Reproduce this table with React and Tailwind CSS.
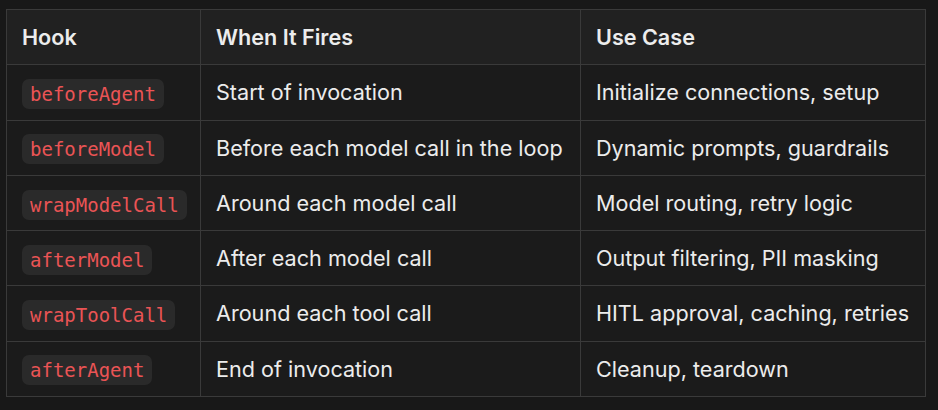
import React from "react";

const rows = [
  ["beforeAgent", "Start of invocation", "Initialize connections, setup"],
  ["beforeModel", "Before each model call in the loop", "Dynamic prompts, guardrails"],
  ["wrapModelCall", "Around each model call", "Model routing, retry logic"],
  ["afterModel", "After each model call", "Output filtering, PII masking"],
  ["wrapToolCall", "Around each tool call", "HITL approval, caching, retries"],
  ["afterAgent", "End of invocation", "Cleanup, teardown"],
];

export default function App() {
  return (
    <div className="w-[938px] h-[410px] bg-[#181818] pt-[9px] pl-[6px]" style={{ fontFamily: "Inter, 'Noto Sans', sans-serif" }}>
      <table className="border-collapse w-[919px] table-fixed text-[21.6px] text-[#ececec]">
        <colgroup>
          <col className="w-[194px]" />
          <col className="w-[380px]" />
          <col className="w-[345px]" />
        </colgroup>
        <thead>
          <tr className="bg-[#212121] h-[55.3px]">
            {["Hook", "When It Fires", "Use Case"].map((h) => (
              <th key={h} className="border border-[#3a3a3a] text-left font-semibold px-[15px] py-0">{h}</th>
            ))}
          </tr>
        </thead>
        <tbody>
          {rows.map(([a, b, c]) => (
            <tr key={a} className="bg-[#1b1b1b] h-[55.3px]">
              <td className="border border-[#3a3a3a] px-[15px] py-0">
                <code className="inline-block rounded-[7px] bg-[#2a2a2a] px-[8px] py-[3px] text-[19px] leading-[24px] text-[#ea5455] align-middle" style={{ fontFamily: "'DejaVu Sans Mono', monospace" }}>{a}</code>
              </td>
              <td className="border border-[#3a3a3a] px-[15px] py-0">{b}</td>
              <td className="border border-[#3a3a3a] px-[15px] py-0">{c}</td>
            </tr>
          ))}
        </tbody>
      </table>
    </div>
  );
}
